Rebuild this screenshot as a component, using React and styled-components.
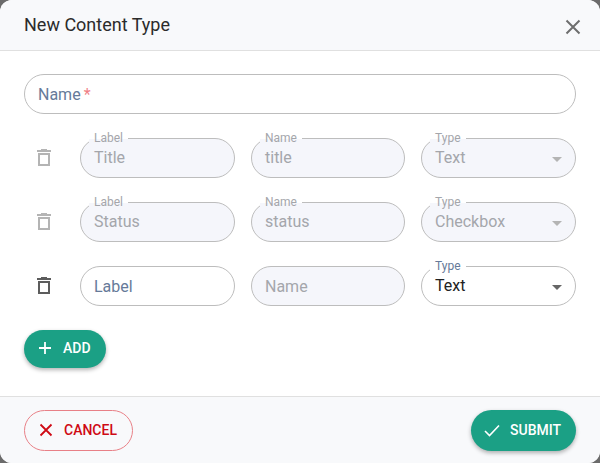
import React from "react";
import styled, { createGlobalStyle } from "styled-components";

const Global = createGlobalStyle`
  html, body { margin: 0; padding: 0; background: #6b6b6b; }
  body { font-family: Roboto, "Liberation Sans", sans-serif; }
  * { box-sizing: border-box; }
`;

const Dialog = styled.div`
  width: 600px; height: 463px; background: #fff; border-radius: 12px; overflow: hidden;
  display: flex; flex-direction: column;
`;
const Header = styled.header`
  height: 51px; flex: none; background: #f8f9fb; border-bottom: 1px solid #e0e0e0;
  display: flex; align-items: center; justify-content: space-between; padding: 0 15px 0 24px;
`;
const Title = styled.h2`
  margin: 0; font-size: 18px; font-weight: 400; color: #2b2b2b; line-height: 50px;
`;
const CloseIcon = styled.svg`
  width: 24px; height: 24px; fill: none; stroke: #6e6e6e; stroke-width: 2; display: block; margin-top: 3px;
`;
const Body = styled.main`
  flex: 1; padding: 23px 24px 0; display: flex; flex-direction: column; gap: 24px;
`;
const Field = styled.div`
  position: relative; height: 40px; border-radius: 20px; border: 1px solid #bdbdbd;
  background: ${p => (p.$disabled ? "#f5f6fb" : "#fff")};
  display: flex; align-items: center; padding: 0 13px ${p => (p.$empty ? 0 : 2)}px; font-size: 16px;
  flex: none;
  width: ${p => p.$width}px;
  color: ${p => p.$color || "#a4a6ab"};
`;
const Placeholder = styled.span`
  color: ${p => p.$color};
`;
const Required = styled.span`
  color: #f07f86; margin-left: 3px; font-size: 16px;
`;
const Floating = styled.span`
  position: absolute; top: -8px; left: 8px; padding: 0 5px; font-size: 12px; line-height: 14px;
  color: ${p => p.$color || "#a4a6ab"};
  background: linear-gradient(to bottom, #fff 0 8px, ${p => p.$under} 8px);
`;
const Caret = styled.span`
  position: absolute; right: 13px; top: 18px; width: 0; height: 0;
  border-left: 5px solid transparent; border-right: 5px solid transparent;
  border-top: 5px solid ${p => p.$color};
`;
const Row = styled.div`
  display: flex; align-items: center; height: 40px;
`;
const TrashButton = styled.span`
  width: 40px; margin-right: 16px; display: flex; justify-content: center; flex: none;
`;
const TrashIcon = styled.svg`
  width: 24px; height: 24px; fill: ${p => p.$color}; display: block;
`;
const Fields = styled.div`
  display: flex; gap: 16px; flex: 1;
`;
const AddButton = styled.button`
  align-self: flex-start; height: 38px; width: 82px; border: none; border-radius: 19px; background: #1ba085;
  color: #fff; font: 500 14px Roboto, sans-serif; display: flex; align-items: center; padding: 0 0 2px 11px; gap: 8px;
  box-shadow: 0 2px 4px rgba(0,0,0,.3);
`;
const BtnIcon = styled.svg`
  width: 20px; height: 20px; fill: none; stroke: ${p => p.$color}; stroke-width: ${p => p.$w || 2}; flex: none;
`;
const Footer = styled.footer`
  height: 67px; flex: none; background: #f8f9fb; border-top: 1px solid #e0e0e0;
  display: flex; align-items: flex-start; justify-content: space-between; padding: 13px 24px 0;
`;
const CancelButton = styled.button`
  height: 41px; width: 109px; border: 1px solid #e88087; border-radius: 21px; background: transparent;
  color: #cf0a14; font: 500 14px Roboto, sans-serif; display: flex; align-items: center; padding: 0 0 2px 11px; gap: 8px;
`;
const SubmitButton = styled.button`
  height: 41px; width: 105px; border: none; border-radius: 21px; background: #1ba085;
  color: #fff; font: 500 14px Roboto, sans-serif; display: flex; align-items: center; padding: 0 0 2px 11px; gap: 8px;
  box-shadow: 0 2px 4px rgba(0,0,0,.3);
`;

const Trash = ({ color }) => (
  <TrashIcon viewBox="0 0 24 24" $color={color}>
    <path fillRule="evenodd" d="M9 3h6v1h4v2H5V4h4V3zM6 7h12v13H6V7zm2 2v9h8V9H8z" />
  </TrashIcon>
);

const rows = [
  { label: "Title", name: "title", type: "Text" },
  { label: "Status", name: "status", type: "Checkbox" },
];

export default function App() {
  return (
    <Dialog>
      <Global />
      <Header>
        <Title>New Content Type</Title>
        <CloseIcon viewBox="0 0 24 24"><path d="M5.5 5.5l13 13M18.5 5.5l-13 13" /></CloseIcon>
      </Header>
      <Body>
        <Field $width={552} $empty>
          <Placeholder $color="#667a99">Name</Placeholder><Required>*</Required>
        </Field>
        {rows.map(r => (
          <Row key={r.name}>
            <TrashButton><Trash color="#b4b4b4" /></TrashButton>
            <Fields>
              <Field $disabled $width={155}><Floating $under="#f5f6fb">Label</Floating>{r.label}</Field>
              <Field $disabled $width={154}><Floating $under="#f5f6fb">Name</Floating>{r.name}</Field>
              <Field $disabled $width={155}><Floating $under="#f5f6fb">Type</Floating>{r.type}<Caret $color="#b4b4b4" /></Field>
            </Fields>
          </Row>
        ))}
        <Row>
          <TrashButton><Trash color="#5c5c5c" /></TrashButton>
          <Fields>
            <Field $width={155} $empty><Placeholder $color="#667a99">Label</Placeholder></Field>
            <Field $disabled $width={154} $empty>Name</Field>
            <Field $width={155} $color="#222"><Floating $color="#667a99" $under="#fff">Type</Floating>Text<Caret $color="#666" /></Field>
          </Fields>
        </Row>
        <AddButton>
          <BtnIcon viewBox="0 0 20 20" $color="#fff" $w={1.8}><path d="M10 4v12M4 10h12" /></BtnIcon>
          ADD
        </AddButton>
      </Body>
      <Footer>
        <CancelButton>
          <BtnIcon viewBox="0 0 20 20" $color="#cf0a14" $w={1.8}><path d="M4.5 4.5l11 11M15.5 4.5l-11 11" /></BtnIcon>
          CANCEL
        </CancelButton>
        <SubmitButton>
          <BtnIcon viewBox="0 0 20 20" $color="#fff" $w={1.6}><path d="M3 11l4.5 4.5L17 5.5" /></BtnIcon>
          SUBMIT
        </SubmitButton>
      </Footer>
    </Dialog>
  );
}
